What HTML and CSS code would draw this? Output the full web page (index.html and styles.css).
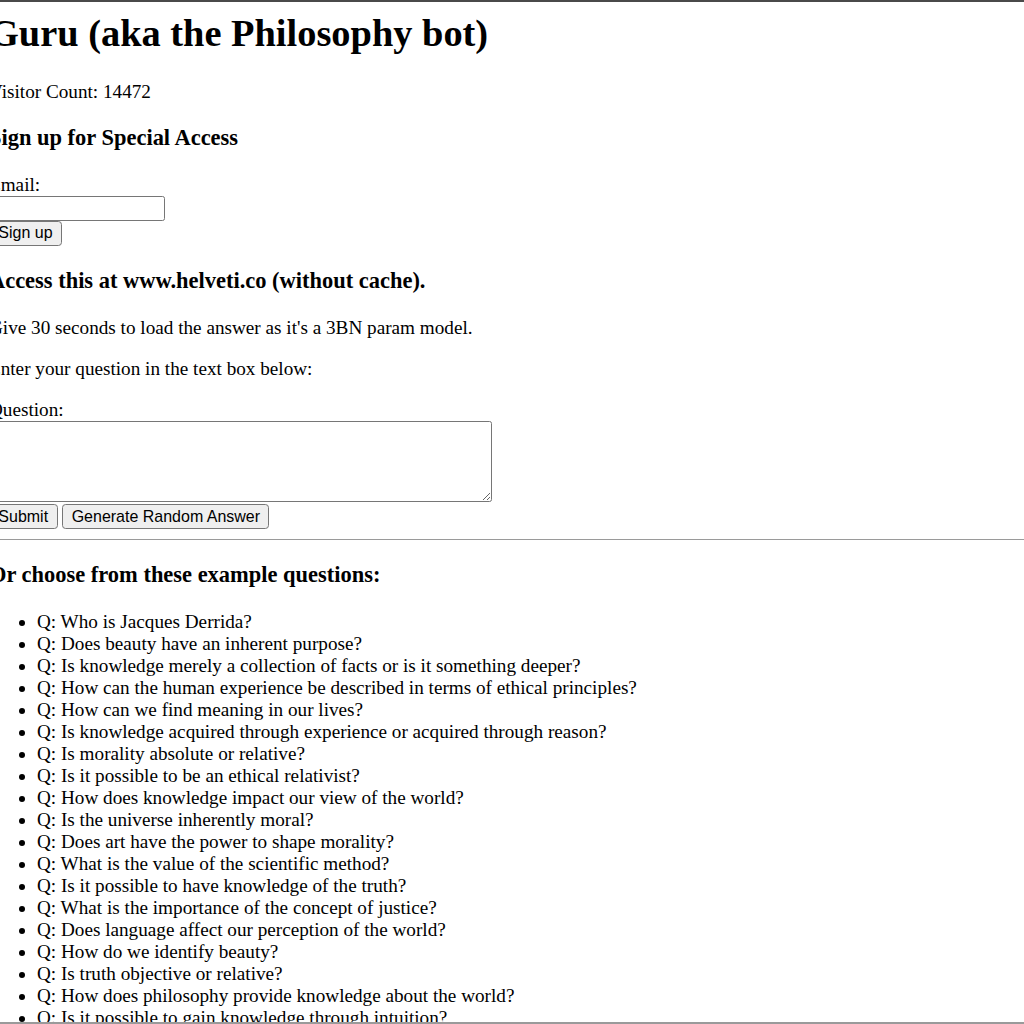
FILE: index.html
```html
<!DOCTYPE html>
<html lang="en">
<head>
<meta charset="utf-8">
<title>Guru (aka the Philosophy bot)</title>
<link rel="stylesheet" href="styles.css">
</head>
<body>
<div class="frame-top"></div>
<main class="page">
  <h1 class="title">Guru (aka the Philosophy bot)</h1>
  <p class="text">Visitor Count: 14472</p>
  <h3 class="subhead">Sign up for Special Access</h3>
  <form class="signup">
    <label for="email">Email:</label><br>
    <input class="field" type="email" id="email"><br>
    <button class="btn" type="button">Sign up</button>
  </form>
  <h3 class="subhead">Access this at www.helveti.co (without cache).</h3>
  <p class="text">Give 30 seconds to load the answer as it's a 3BN param model.</p>
  <p class="text">Enter your question in the text box below:</p>
  <form class="ask">
    <label for="question">Question:</label><br>
    <textarea class="area" id="question" rows="4" cols="50"></textarea><br>
    <button class="btn" type="button">Submit</button>
    <button class="btn" type="button">Generate Random Answer</button>
  </form>
  <hr class="rule">
  <h3 class="subhead">Or choose from these example questions:</h3>
  <ul class="examples">
    <li>Q: Who is Jacques Derrida?</li>
    <li>Q: Does beauty have an inherent purpose?</li>
    <li>Q: Is knowledge merely a collection of facts or is it something deeper?</li>
    <li>Q: How can the human experience be described in terms of ethical principles?</li>
    <li>Q: How can we find meaning in our lives?</li>
    <li>Q: Is knowledge acquired through experience or acquired through reason?</li>
    <li>Q: Is morality absolute or relative?</li>
    <li>Q: Is it possible to be an ethical relativist?</li>
    <li>Q: How does knowledge impact our view of the world?</li>
    <li>Q: Is the universe inherently moral?</li>
    <li>Q: Does art have the power to shape morality?</li>
    <li>Q: What is the value of the scientific method?</li>
    <li>Q: Is it possible to have knowledge of the truth?</li>
    <li>Q: What is the importance of the concept of justice?</li>
    <li>Q: Does language affect our perception of the world?</li>
    <li>Q: How do we identify beauty?</li>
    <li>Q: Is truth objective or relative?</li>
    <li>Q: How does philosophy provide knowledge about the world?</li>
    <li>Q: Is it possible to gain knowledge through intuition?</li>
    <li>Q: What is the nature of reality?</li>
  </ul>
</main>
<div class="frame-bottom"></div>
</body>
</html>
```

FILE: styles.css
```css
html {
  overflow: hidden;
  background: #fff;
}
body {
  margin: 0;
  color: #000;
  font-family: "Liberation Serif", "Times New Roman", serif;
  font-size: 16px;
}
.frame-top {
  position: fixed;
  top: 0;
  left: 0;
  right: 0;
  height: 2px;
  background: #4a4a4a;
  z-index: 2;
}
.frame-bottom {
  position: fixed;
  bottom: 0;
  left: 0;
  right: 0;
  height: 2px;
  background: #9a9a9a;
  z-index: 2;
}
.page {
  zoom: 1.2;
  margin: 0 0 0 -9.2px;
  padding: 0;
}
.title {
  font-size: 32px;
  font-weight: bold;
  margin: 9.2px 0 21.44px;
}
.text {
  margin: 16px 0;
}
.subhead {
  font-size: 18.72px;
  font-weight: bold;
  margin: 18.72px 0;
}
.signup, .ask {
  margin: 0;
}
.field {
  font: 13.333px "Liberation Sans", Arial, sans-serif;
  width: 147px;
  padding: 1px 2px;
  border: 1px solid #767676;
  border-radius: 2px;
  margin: 0;
  height: 21px;
  box-sizing: border-box;
}
.area {
  font: 13.333px "Liberation Mono", monospace;
  width: 419px;
  height: 67px;
  box-sizing: border-box;
  padding: 2px;
  border: 1px solid #767676;
  border-radius: 2px;
  margin: 0 0 2px;
  vertical-align: bottom;
}
.btn {
  font: 13.333px "Liberation Sans", Arial, sans-serif;
  background: #efefef;
  color: #000;
  border: 1px solid #767676;
  border-radius: 3px;
  padding: 1px 7px;
  margin: 0;
  height: 21px;
  box-sizing: border-box;
}
.rule {
  margin: 8px 0;
  border: 0;
  border-top: 1px solid #9a9a9a;
  height: 0;
}
.examples {
  margin: 16px 0;
  padding-left: 40px;
}
.examples li {
  list-style: disc;
}
```
